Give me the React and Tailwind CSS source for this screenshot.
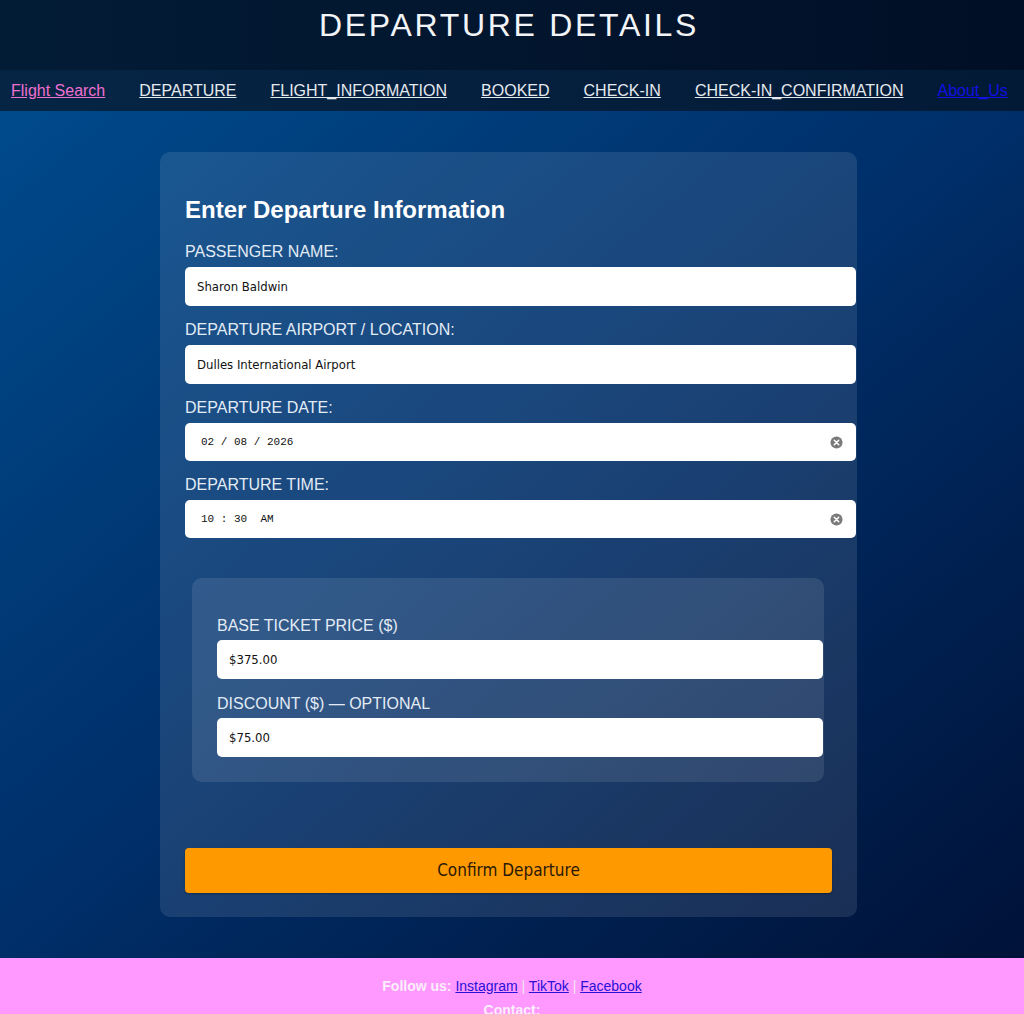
import React from "react";

const ClearIcon = () => (
  <svg width="13" height="13" viewBox="0 0 14 14" className="shrink-0">
    <circle cx="7" cy="7" r="6.5" fill="#7a7a7a" />
    <path d="M4.6 4.6 L9.4 9.4 M9.4 4.6 L4.6 9.4" stroke="#fff" strokeWidth="1.6" strokeLinecap="round" />
  </svg>
);

function TextField({ label, value, inner }) {
  return (
    <div>
      <div
        className={`text-[16px] leading-[18px] text-[#e3ebf5] font-['Liberation_Sans',Arial,sans-serif] ${inner ? "mb-[5px]" : "mb-[6px]"}`}
      >
        {label}
      </div>
      <div
        className={`h-[39px] ${inner ? "w-[606px]" : "w-[671px]"} bg-white rounded-[5px] flex items-center pl-[12px] text-[13px] text-[#111] font-['DejaVu_Sans_Condensed','DejaVu_Sans',sans-serif] [font-stretch:condensed]`}
      >
        {value}
      </div>
    </div>
  );
}

function MonoField({ label, value }) {
  return (
    <div>
      <div className="text-[16px] leading-[18px] text-[#e3ebf5] font-['Liberation_Sans',Arial,sans-serif] mb-[6px]">
        {label}
      </div>
      <div className="h-[38px] w-[671px] bg-white rounded-[5px] flex items-center pl-[16px] pr-[13px] justify-between">
        <span className="whitespace-pre text-[11px] text-[#111] font-['Liberation_Mono','Courier_New',monospace]">
          {value}
        </span>
        <ClearIcon />
      </div>
    </div>
  );
}

export default function App() {
  const navLinks = [
    { t: "Flight Search", c: "text-[#f06fd0] decoration-[#f06fd0]" },
    { t: "DEPARTURE", c: "text-[#e6e9ee]" },
    { t: "FLIGHT_INFORMATION", c: "text-[#e6e9ee]" },
    { t: "BOOKED", c: "text-[#e6e9ee]" },
    { t: "CHECK-IN", c: "text-[#e6e9ee]" },
    { t: "CHECK-IN_CONFIRMATION", c: "text-[#e6e9ee]" },
    { t: "About_Us", c: "text-[#1010e0]" },
  ];

  return (
    <div className="w-[1024px] font-['Liberation_Sans',Arial,sans-serif]">
      <header className="h-[70px] bg-linear-to-r from-[#031c36] to-[#010f26] pt-[6px]">
        <h1 className="text-center pr-[6px] text-[32px] leading-[38px] tracking-[2.7px] text-[#f2f4f7] font-normal">
          DEPARTURE DETAILS
        </h1>
      </header>
      <nav className="h-[41px] bg-linear-to-r from-[#062545] to-[#031a36] flex items-center pl-[11px] pt-[1px] gap-[34px]">
        {navLinks.map((l) => (
          <a key={l.t} href="#" className={`text-[16px] leading-[18px] underline ${l.c}`}>
            {l.t}
          </a>
        ))}
      </nav>
      <main className="bg-linear-to-br from-[#004a8c] via-[#002e68] to-[#001238] pt-[41px] pb-[41px]">
        <div className="ml-[160px] w-[697px] rounded-[10px] bg-white/10 px-[25px] pt-[44px] pb-[24px]">
          <h2 className="text-[24px] leading-[28px] font-bold text-white mb-[19px]">
            Enter Departure Information
          </h2>
          <div className="flex flex-col gap-[15px]">
            <TextField label="PASSENGER NAME:" value="Sharon Baldwin" />
            <TextField label="DEPARTURE AIRPORT / LOCATION:" value="Dulles International Airport" />
            <MonoField label="DEPARTURE DATE:" value="02 / 08 / 2026" />
            <MonoField label="DEPARTURE TIME:" value="10 : 30  AM" />
          </div>
          <div className="mt-[40px] ml-[7px] w-[632px] rounded-[10px] bg-white/10 px-[25px] pt-[39px] pb-[25px] flex flex-col gap-[16px]">
            <TextField inner label="BASE TICKET PRICE ($)" value="$375.00" />
            <TextField inner label="DISCOUNT ($) — OPTIONAL" value="$75.00" />
          </div>
          <button className="mt-[66px] w-[647px] h-[45px] rounded-[4px] bg-[#ff9900] text-[17px] text-[#2a1a05] font-['DejaVu_Sans_Condensed','DejaVu_Sans',sans-serif] [font-stretch:condensed] shadow-[0_1px_2px_rgba(0,0,0,0.3)]">
            Confirm Departure
          </button>
        </div>
      </main>
      <footer className="bg-[#ff99ff] pt-[19px] pb-[20px] text-center text-[14px] leading-[18px] flex flex-col gap-[6px]">
        <p>
          <span className="font-bold text-[#fbeefb]">Follow us: </span>
          <a href="#" className="underline text-[#2a10d8]">Instagram</a>
          <span className="text-[#f4e4f4]"> | </span>
          <a href="#" className="underline text-[#2a10d8]">TikTok</a>
          <span className="text-[#f4e4f4]"> | </span>
          <a href="#" className="underline text-[#2a10d8]">Facebook</a>
        </p>
        <p className="font-bold text-[#fbeefb]">Contact:</p>
        <p className="text-[#fbeefb]">info@flightbooking.com</p>
      </footer>
    </div>
  );
}
